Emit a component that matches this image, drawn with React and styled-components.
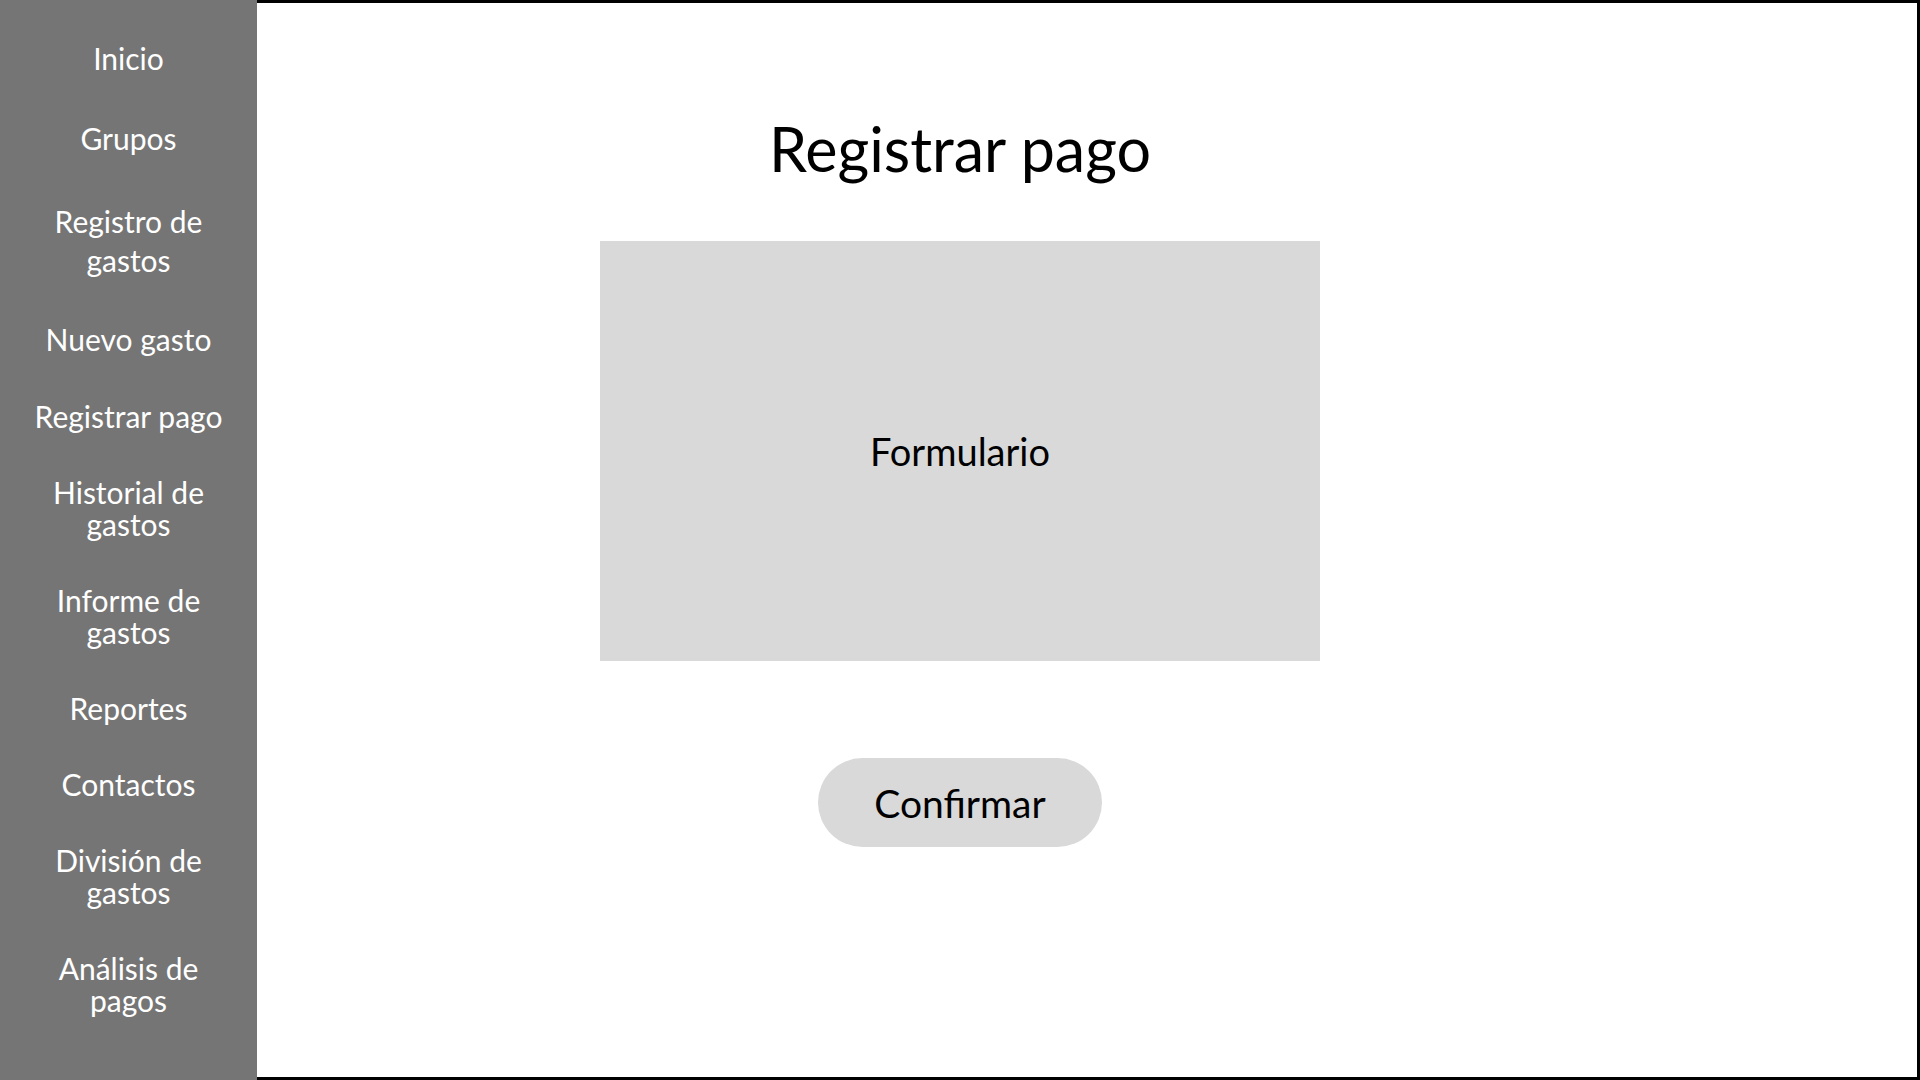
import styled, { createGlobalStyle } from "styled-components";

const GlobalStyle = createGlobalStyle`
  html, body {
    margin: 0;
    padding: 0;
    background: #ffffff;
  }
  body {
    font-family: "Lato", "Liberation Sans", sans-serif;
  }
`;

const Layout = styled.div`
  display: flex;
  width: 100%;
  height: 100vh;
`;

const Sidebar = styled.nav`
  width: 257px;
  flex-shrink: 0;
  background-color: #757575;
  display: flex;
  flex-direction: column;
  align-items: center;
  padding-top: 42px;
  box-sizing: border-box;
`;

const NavItem = styled.a`
  margin-top: ${(p) => p.$gap}px;
  color: #ffffff;
  font-size: 30px;
  line-height: ${(p) => p.$lh}px;
  text-align: center;
  text-decoration: none;
  white-space: pre-line;
`;

const Main = styled.main`
  flex: 1;
  border: 3px solid #000000;
  border-left: none;
  box-sizing: border-box;
  padding: 109px 0 0 343px;
`;

const Content = styled.section`
  width: 720px;
  display: flex;
  flex-direction: column;
  align-items: center;
`;

const Title = styled.h1`
  margin: 0;
  font-size: 61px;
  line-height: 73px;
  font-weight: 400;
  color: #000000;
`;

const FormBox = styled.div`
  margin-top: 56px;
  width: 720px;
  height: 420px;
  background-color: #d9d9d9;
  display: flex;
  align-items: center;
  justify-content: center;
  font-size: 38px;
  color: #000000;
`;

const ConfirmButton = styled.button`
  margin-top: 97px;
  width: 284px;
  height: 89px;
  border: none;
  border-radius: 45px;
  background-color: #d9d9d9;
  font-family: inherit;
  font-size: 39px;
  color: #000000;
  cursor: pointer;
`;

const links = [
  { label: "Inicio", gap: 0, lh: 32 },
  { label: "Grupos", gap: 48, lh: 32 },
  { label: "Registro de\ngastos", gap: 48, lh: 39 },
  { label: "Nuevo gasto", gap: 43, lh: 32 },
  { label: "Registrar pago", gap: 45, lh: 32 },
  { label: "Historial de\ngastos", gap: 44, lh: 32 },
  { label: "Informe de\ngastos", gap: 44, lh: 32 },
  { label: "Reportes", gap: 44, lh: 32 },
  { label: "Contactos", gap: 44, lh: 32 },
  { label: "División de\ngastos", gap: 44, lh: 32 },
  { label: "Análisis de\npagos", gap: 44, lh: 32 },
];

const App = () => {
  return (
    <>
      <GlobalStyle />
      <Layout>
        <Sidebar>
          {links.map((link) => (
            <NavItem key={link.label} $gap={link.gap} $lh={link.lh}>
              {link.label}
            </NavItem>
          ))}
        </Sidebar>
        <Main>
          <Content>
            <Title>Registrar pago</Title>
            <FormBox>Formulario</FormBox>
            <ConfirmButton>Confirmar</ConfirmButton>
          </Content>
        </Main>
      </Layout>
    </>
  );
};

export default App;
